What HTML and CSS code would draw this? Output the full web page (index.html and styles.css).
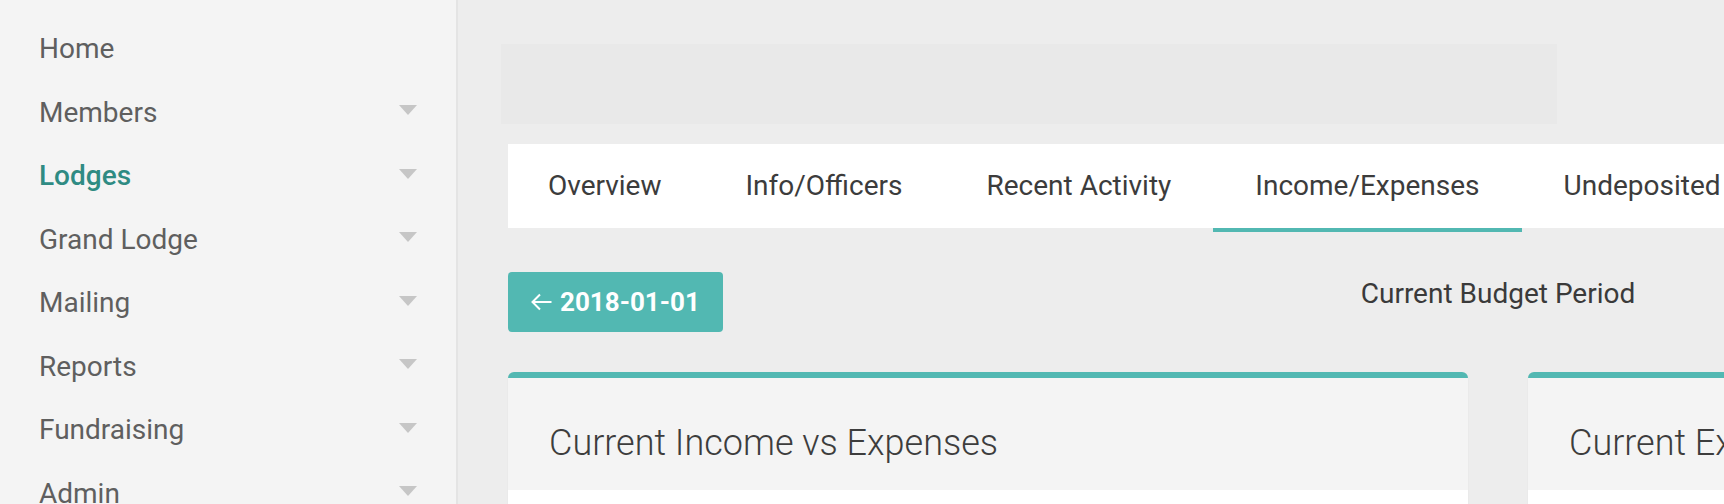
FILE: index.html
```html
<!DOCTYPE html>
<html lang="en">
<head>
  <meta charset="UTF-8" />
  <meta name="viewport" content="width=device-width, initial-scale=1.0"/>
  <title>Lodge Income/Expenses</title>
  <link rel="stylesheet" href="styles.css">
</head>
<body>
  <aside class="sidebar">
    <a class="nav-item" href="#">Home</a>
    <a class="nav-item" href="#">Members <span class="caret"></span></a>
    <a class="nav-item active" href="#">Lodges <span class="caret"></span></a>
    <a class="nav-item" href="#">Grand Lodge <span class="caret"></span></a>
    <a class="nav-item" href="#">Mailing <span class="caret"></span></a>
    <a class="nav-item" href="#">Reports <span class="caret"></span></a>
    <a class="nav-item" href="#">Fundraising <span class="caret"></span></a>
    <a class="nav-item" href="#">Admin <span class="caret"></span></a>
  </aside>

  <main class="content">
    <div class="page-header"></div>

    <nav class="tabs">
      <a class="tab" href="#">Overview</a>
      <a class="tab" href="#">Info/Officers</a>
      <a class="tab" href="#">Recent Activity</a>
      <a class="tab active" href="#">Income/Expenses</a>
      <a class="tab" href="#">Undeposited Funds</a>
      <a class="tab" href="#">Dues</a>
    </nav>

    <div class="period-bar">
      <div>
        <button class="period-btn">
          <svg width="22" height="18" viewBox="0 0 22 18" fill="none" stroke="#fff" stroke-width="2">
            <path d="M21.5 9H2.5M10 1.5L2.5 9l7.5 7.5"/>
          </svg>
          2018-01-01
        </button>
      </div>
      <div class="period-label">Current Budget Period</div>
      <div></div>
    </div>

    <div class="cards">
      <section class="card">
        <h2 class="card-title">Current Income vs Expenses</h2>
        <div class="card-body"></div>
      </section>
      <section class="card">
        <h2 class="card-title">Current Expenses by Category</h2>
        <div class="card-body"></div>
      </section>
    </div>
  </main>
</body>
</html>
```

FILE: styles.css
```css
body {
  margin: 0;
  height: 504px;
  overflow: hidden;
  display: flex;
  background-color: #ededed;
  font-family: Roboto, "Noto Sans", sans-serif;
}
a {
  text-decoration: none;
}
.sidebar {
  flex: 0 0 456px;
  padding-top: 17px;
  background-color: #f4f4f4;
  border-right: 2px solid #e4e4e4;
}
.nav-item {
  display: flex;
  align-items: center;
  justify-content: space-between;
  height: 63.5px;
  padding: 0 39px;
  font-size: 28px;
  line-height: 63.5px;
  color: #5f5f5f;
}
.nav-item.active {
  color: #2f8b83;
  font-weight: 500;
}
.caret {
  width: 0;
  height: 0;
  margin-bottom: 4px;
  border-left: 9.5px solid transparent;
  border-right: 9.5px solid transparent;
  border-top: 10px solid #c6c6c6;
}
.content {
  flex: 0 0 1980px;
  padding: 44px 0 0 50px;
}
.page-header {
  width: 1056px;
  height: 80px;
  margin-left: -7px;
  background-color: #e9e9e9;
}
.tabs {
  display: flex;
  height: 84px;
  margin-top: 20px;
  background-color: #fff;
}
.tab {
  height: 84px;
  padding: 0 42px;
  font-size: 28px;
  line-height: 84px;
  color: #3c3c3c;
  white-space: nowrap;
}
.tab:first-child {
  padding-left: 40px;
}
.tab.active {
  border-bottom: 4px solid #52b8b2;
}
.period-bar {
  display: grid;
  grid-template-columns: repeat(3, 1fr);
  align-items: center;
  margin-top: 44px;
}
.period-btn {
  display: inline-flex;
  align-items: center;
  gap: 8px;
  height: 60px;
  padding: 0 23px 0 22px;
  border: none;
  border-radius: 4px;
  background-color: #52b8b2;
  color: #fff;
  font-family: inherit;
  font-size: 26px;
  font-weight: bold;
}
.period-label {
  margin-bottom: 18px;
  text-align: center;
  font-size: 28px;
  color: #3a3a3a;
}
.cards {
  display: grid;
  grid-template-columns: 960px 960px;
  gap: 60px;
  margin-top: 40px;
}
.card {
  border-top: 6px solid #52b8b2;
  border-radius: 6px 6px 0 0;
  background-color: #fff;
  box-shadow: 0 1px 2px rgba(0, 0, 0, 0.06);
}
.card-title {
  height: 112px;
  box-sizing: border-box;
  margin: 0;
  padding: 45px 41px 0;
  background-color: #f4f4f4;
  font-size: 36px;
  font-weight: 300;
  line-height: 40px;
  color: #3d3d3d;
  white-space: nowrap;
}
.card-body {
  height: 200px;
}
```
